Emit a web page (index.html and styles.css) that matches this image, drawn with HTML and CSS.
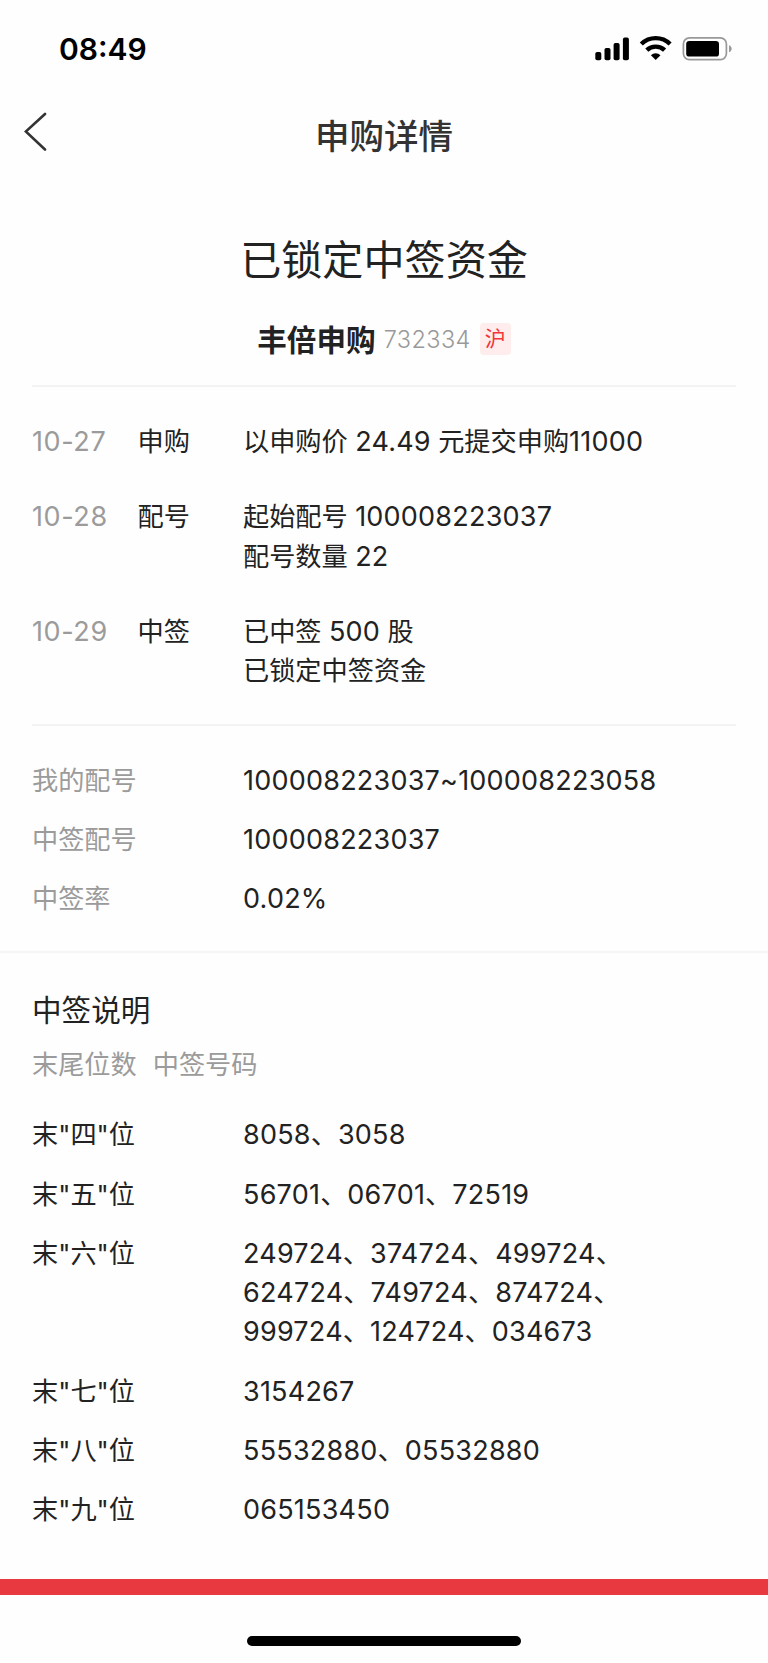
FILE: index.html
```html
<!DOCTYPE html>
<html lang="zh-CN">

<head>
  <meta charset="utf-8">
  <title>申购详情</title>
  <link rel="stylesheet" href="styles.css">
</head>

<body>
  <div class="status-bar">
    <span class="time">08:49</span>
    <svg class="status-icons" width="140" height="28" viewBox="0 0 140 28">
      <!-- signal -->
      <rect x="0.3" y="17" width="6" height="8.2" rx="1.8" />
      <rect x="9.5" y="13" width="6" height="12.2" rx="1.8" />
      <rect x="18.6" y="8" width="6" height="17.2" rx="1.8" />
      <rect x="27.9" y="2.6" width="6" height="22.6" rx="1.8" />
      <!-- wifi -->
      <path d="M46.3 9a20.6 20.6 0 0 1 28.8 0" fill="none" stroke="#000" stroke-width="4.4" />
      <path d="M51.8 15.2a12.8 12.8 0 0 1 17.8 0" fill="none" stroke="#000" stroke-width="4.4" />
      <path d="M60.7 25l-4.8-4.8a7 7 0 0 1 9.6 0z" />
      <!-- battery -->
      <rect x="88.4" y="2.9" width="43" height="21.7" rx="6" fill="none" stroke="#999" stroke-width="1.7" />
      <rect x="91.2" y="5.9" width="32.8" height="15.7" rx="3.2" />
      <path d="M134 10.3c3.6 1.3 3.6 5.7 0 7z" fill="#999" />
    </svg>
  </div>

  <div class="nav">
    <svg class="back" width="24" height="40" viewBox="0 0 24 40">
      <path d="M21 2L1.8 19.5L21 37.5" fill="none" stroke="#333" stroke-width="2.6" stroke-linecap="round" />
    </svg>
    <h1 class="nav-title">申购详情</h1>
  </div>

  <div class="summary">
    <h2 class="state">已锁定中签资金</h2>
    <div class="stock">
      <span class="stock-name">丰倍申购</span>
      <span class="stock-code">732334</span>
      <span class="market">沪</span>
    </div>
  </div>

  <div class="steps">
    <div class="step">
      <span class="date num">10-27</span>
      <span class="step-name">申购</span>
      <div class="value">以申购价 <span class="num">24.49</span> 元提交申购<span class="num">11000</span></div>
    </div>
    <div class="step">
      <span class="date num">10-28</span>
      <span class="step-name">配号</span>
      <div class="value">起始配号 <span class="num">100008223037</span><br>配号数量 <span class="num">22</span></div>
    </div>
    <div class="step">
      <span class="date num">10-29</span>
      <span class="step-name">中签</span>
      <div class="value">已中签 <span class="num">500</span> 股<br>已锁定中签资金</div>
    </div>
  </div>

  <div class="rows result">
    <div class="row"><span class="label gray">我的配号</span><span class="value num">100008223037~100008223058</span></div>
    <div class="row"><span class="label gray">中签配号</span><span class="value num">100008223037</span></div>
    <div class="row"><span class="label gray">中签率</span><span class="value num">0.02%</span></div>
  </div>

  <div class="notes">
    <h3 class="notes-title">中签说明</h3>
    <div class="notes-head gray"><span>末尾位数</span><span>中签号码</span></div>
    <div class="rows">
      <div class="row"><span class="label">末"四"位</span><span class="value num">8058、3058</span></div>
      <div class="row"><span class="label">末"五"位</span><span class="value num">56701、06701、72519</span></div>
      <div class="row"><span class="label">末"六"位</span><span class="value num">249724、374724、499724、<br>624724、749724、874724、<br>999724、124724、034673</span></div>
      <div class="row"><span class="label">末"七"位</span><span class="value num">3154267</span></div>
      <div class="row"><span class="label">末"八"位</span><span class="value num">55532880、05532880</span></div>
      <div class="row"><span class="label">末"九"位</span><span class="value num">065153450</span></div>
    </div>
  </div>

  <div class="footer">
    <div class="home-bar"></div>
  </div>
</body>

</html>
```
FILE: styles.css
```css
* {
  box-sizing: border-box;
}

body {
  margin: 0;
  height: 1663px;
  display: flex;
  flex-direction: column;
  background: #fefefe;
  color: #222;
  font-family: Inter, "Noto Sans CJK SC", sans-serif;
  font-size: 26.2px;
  line-height: 39.4px;
}

h1, h2, h3 {
  margin: 0;
  font-weight: 400;
}

.num {
  font-size: 27px;
  letter-spacing: 0.22px;
}

.gray {
  color: #9b9b9b;
}

.status-bar {
  display: flex;
  justify-content: space-between;
  height: 98px;
  padding: 35px 33px 0 59px;
  color: #000;
}

.time {
  font-size: 30px;
  font-weight: 600;
  line-height: 29px;
}

.nav {
  display: grid;
  grid-template-columns: 24px 1fr 24px;
  align-items: start;
  height: 102px;
  padding: 14px 24px 0;
}

.nav-title {
  padding-top: 5px;
  color: #333;
  font-size: 34.5px;
  font-weight: 500;
  line-height: 40px;
  text-align: center;
}

.summary {
  height: 187px;
  margin: 0 32px;
  padding-top: 30px;
  border-bottom: 2px solid #f3f3f3;
  text-align: center;
}

.state {
  font-size: 41.1px;
  line-height: 60px;
}

.stock {
  display: flex;
  justify-content: center;
  align-items: center;
  height: 32px;
  margin-top: 33px;
}

.stock-name {
  padding-top: 3px;
  font-size: 29.6px;
  font-weight: 700;
}

.stock-code {
  margin: 0 9px 0 8px;
  padding-top: 1px;
  color: #999;
  font-size: 23.5px;
  font-weight: 300;
  letter-spacing: 0.4px;
}

.market {
  width: 31px;
  height: 32px;
  border-radius: 4px;
  background: #ffecec;
  color: #f0353b;
  font-size: 21px;
  line-height: 31px;
}

.steps {
  display: flex;
  flex-direction: column;
  gap: 35.6px;
  height: 339px;
  margin: 0 32px;
  padding-top: 35.4px;
  border-bottom: 2px solid #f3f3f3;
}

.step {
  display: grid;
  grid-template-columns: 105.5px 105.5px 1fr;
}

.date {
  color: #9b9b9b;
  letter-spacing: 0.6px;
}

.rows {
  display: flex;
  flex-direction: column;
  gap: 19.7px;
}

.row {
  display: grid;
  grid-template-columns: 211px 1fr;
}

.value {
  white-space: nowrap;
}

.result {
  height: 227px;
  padding: 35px 32px 0;
  border-bottom: 2px solid #f6f6f6;
}

.notes {
  height: 626px;
  padding: 37px 32px 0;
}

.notes-title {
  font-size: 29.6px;
  line-height: 40px;
}

.notes-head {
  display: flex;
  gap: 16px;
  margin: 15px 0 31px;
}

.footer {
  flex: 1;
  padding-top: 41px;
  border-top: 16px solid #e93940;
}

.home-bar {
  width: 274px;
  height: 10px;
  margin: 0 auto;
  border-radius: 5px;
  background: #000;
}
```
